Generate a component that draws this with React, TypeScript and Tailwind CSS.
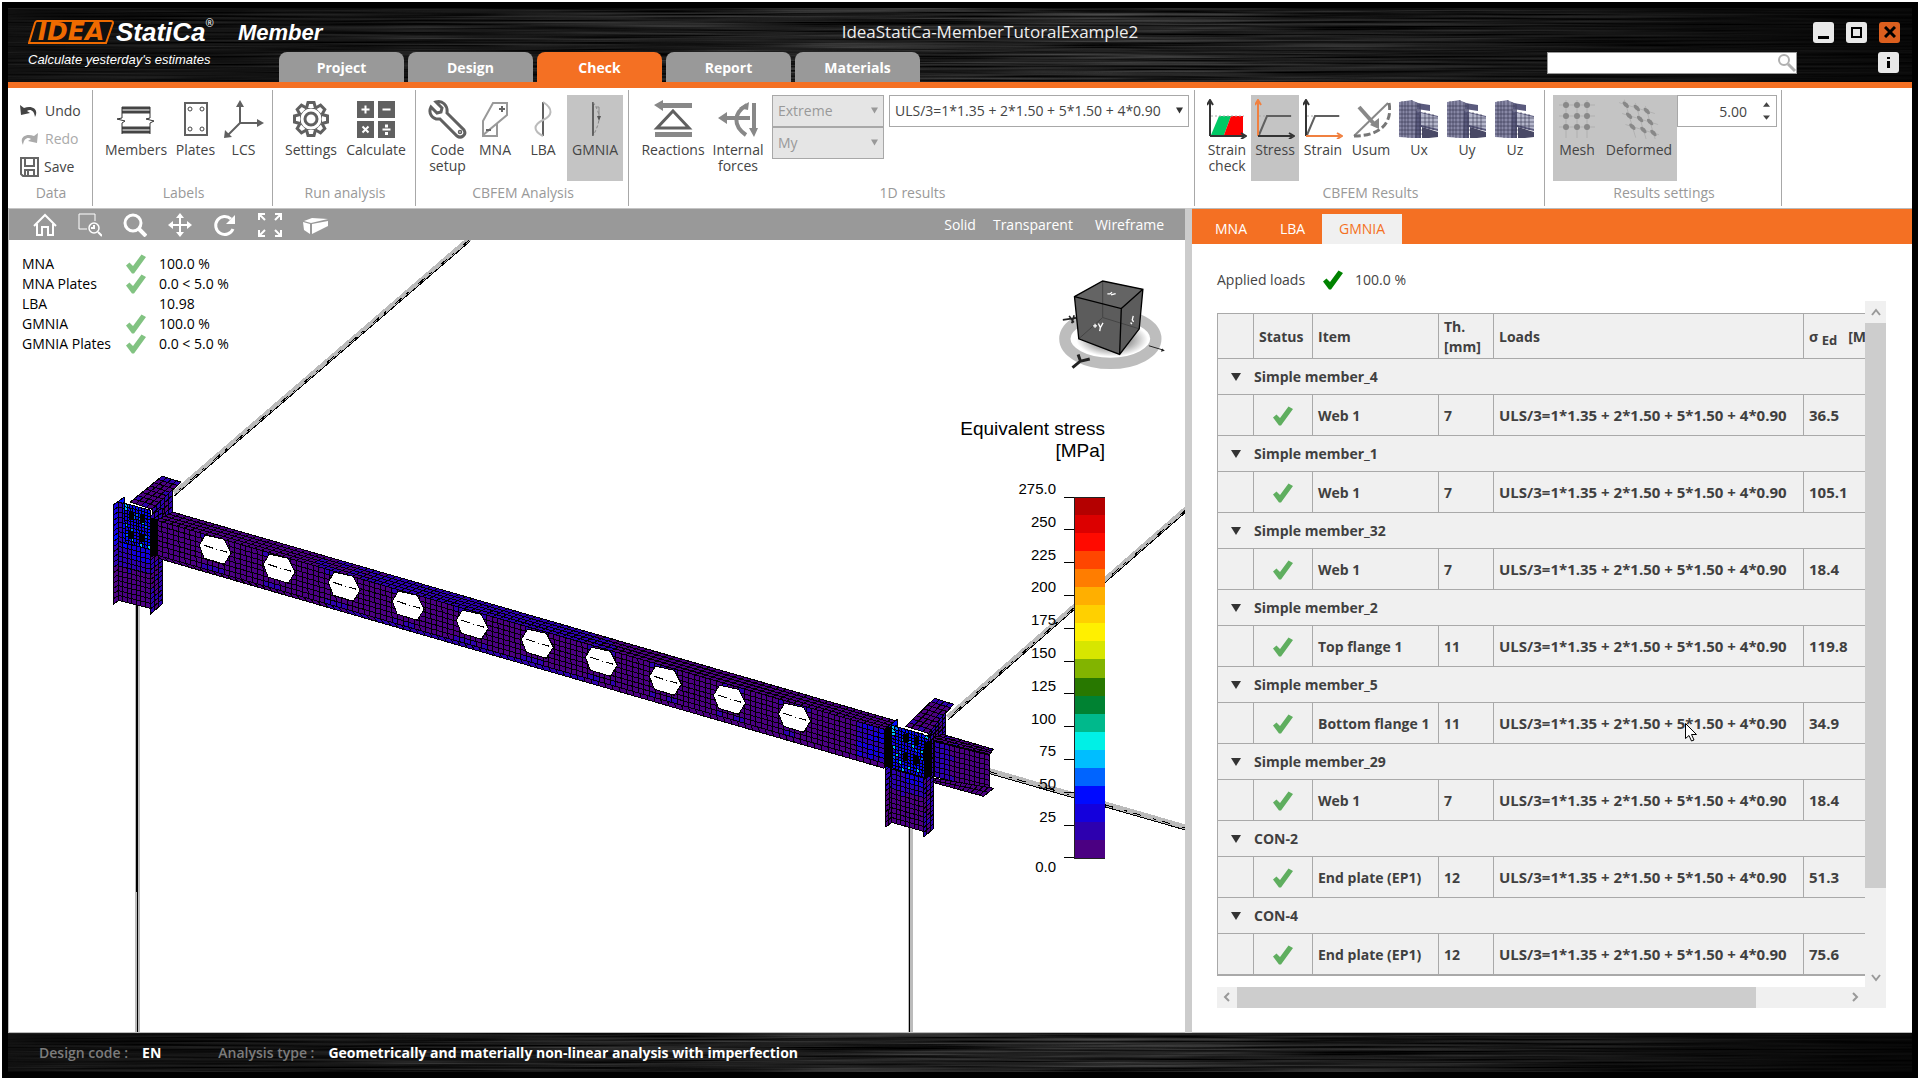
import React from 'react';
import clsx from 'clsx';

type Point = [number, number];

interface ToolProps {
    label: string;
    width: string;
    active?: boolean;
    children: React.ReactNode;
}

interface MeshProps {
    corners: [Point, Point, Point, Point];
    cols: number;
    rows: number;
    color: (u: number, v: number, noise: number) => string;
}

interface ResultGroup {
    name: string;
    item: string;
    thickness: number;
    stress: string;
}

const LOAD_CASE = 'ULS/3=1*1.35 + 2*1.50 + 5*1.50 + 4*0.90';

const groups: ResultGroup[] = [
    { name: 'Simple member_4', item: 'Web 1', thickness: 7, stress: '36.5' },
    { name: 'Simple member_1', item: 'Web 1', thickness: 7, stress: '105.1' },
    { name: 'Simple member_32', item: 'Web 1', thickness: 7, stress: '18.4' },
    { name: 'Simple member_2', item: 'Top flange 1', thickness: 11, stress: '119.8' },
    { name: 'Simple member_5', item: 'Bottom flange 1', thickness: 11, stress: '34.9' },
    { name: 'Simple member_29', item: 'Web 1', thickness: 7, stress: '18.4' },
    { name: 'CON-2', item: 'End plate (EP1)', thickness: 12, stress: '51.3' },
    { name: 'CON-4', item: 'End plate (EP1)', thickness: 12, stress: '75.6' }
];

const summary = [
    { label: 'MNA', ok: true, value: '100.0 %' },
    { label: 'MNA Plates', ok: true, value: '0.0 < 5.0 %' },
    { label: 'LBA', ok: false, value: '10.98' },
    { label: 'GMNIA', ok: true, value: '100.0 %' },
    { label: 'GMNIA Plates', ok: true, value: '0.0 < 5.0 %' }
];

const legendColors = [
    '#b40000', '#dc0000', '#ff0a00', '#ff4600', '#ff7d00', '#ffaf00', '#ffd000', '#fff000', '#d7e600', '#82b400',
    '#287800', '#008232', '#00b98c', '#00f0e6', '#00beff', '#0064ff', '#000aff', '#1400dc', '#2d00af', '#4b0082'
];

const legendLabels = ['275.0', '250', '225', '200', '175', '150', '125', '100', '75', '50', '25', '0.0'];

const PURPLE = '#4b0082';
const INDIGO = '#2d00af';
const BLUE = '#1400dc';
const BRIGHT = '#000aff';
const SKY = '#0064ff';
const CYAN = '#00beff';

function noiseAt(i: number, j: number) {
    const n = Math.sin(i * 12.9898 + j * 78.233) * 43758.5453;
    return n - Math.floor(n);
}

/* ---------- 3D scene ---------- */

function Mesh({ corners, cols, rows, color }: MeshProps) {
    const [a, b, c, d] = corners;
    const at = (u: number, v: number): string => {
        const x = (1 - v) * ((1 - u) * a[0] + u * b[0]) + v * ((1 - u) * d[0] + u * c[0]);
        const y = (1 - v) * ((1 - u) * a[1] + u * b[1]) + v * ((1 - u) * d[1] + u * c[1]);
        return `${x.toFixed(1)} ${y.toFixed(1)}`;
    };
    const fills: Record<string, string> = {};
    for (let i = 0; i < cols; i++) {
        for (let j = 0; j < rows; j++) {
            const fill = color((i + 0.5) / cols, (j + 0.5) / rows, noiseAt(i, j));
            fills[fill] = (fills[fill] || '') +
                `M${at(i / cols, j / rows)}L${at((i + 1) / cols, j / rows)}L${at((i + 1) / cols, (j + 1) / rows)}L${at(i / cols, (j + 1) / rows)}Z`;
        }
    }
    let lines = '';
    for (let i = 0; i <= cols; i++) lines += `M${at(i / cols, 0)}L${at(i / cols, 1)}`;
    for (let j = 0; j <= rows; j++) lines += `M${at(0, j / rows)}L${at(1, j / rows)}`;
    return (
        <g>
            {Object.entries(fills).map(([fill, d]) => (
                <path key={fill} d={d} fill={fill} />
            ))}
            <path d={lines} fill="none" stroke="#000" strokeWidth="1" />
        </g>
    );
}

function Bar({ from, to }: { from: Point; to: Point }) {
    return (
        <g>
            <line x1={from[0]} y1={from[1] - 1} x2={to[0]} y2={to[1] - 1} stroke="#bbbbbb" strokeWidth="5" />
            <line x1={from[0]} y1={from[1]} x2={to[0]} y2={to[1]} stroke="#000" strokeWidth="1" strokeDasharray="9 12 3 6" />
            <line x1={from[0]} y1={from[1] + 2} x2={to[0]} y2={to[1] + 2} stroke="#000" strokeWidth="1" />
        </g>
    );
}

function Scene() {
    const holes = Array.from({ length: 10 }, (_, i) => i);
    const flange = (u: number, _v: number, n: number) => (u > 0.2 + n * 0.12 && u < 0.58 + n * 0.06 ? INDIGO : PURPLE);
    const web = (u: number, v: number, n: number) => {
        if (u > 0.96) return n > 0.4 ? INDIGO : BLUE;
        const near = Math.abs(((u * 11.2 - 0.82) % 1 + 1) % 1 - 0.5) > 0.28;
        return near && u > 0.06 && u < 0.93 && (v < 0.15 || v > 0.82) && n > 0.3 ? INDIGO : PURPLE;
    };
    const column = (u: number, v: number, n: number) => {
        if (v < 0.44) return u < 0.15 ? INDIGO : n > 0.6 ? BRIGHT : BLUE;
        if (v < 0.54) return u > 0.4 ? BLUE : INDIGO;
        return v < 0.62 + n * 0.06 ? INDIGO : PURPLE;
    };
    const panel = (u: number, v: number, n: number) => {
        if (u < 0.12 && v < 0.2) return CYAN;
        if (n > 0.96) return CYAN;
        return n > 0.85 ? SKY : n > 0.3 ? BRIGHT : BLUE;
    };
    const side = (u: number, v: number, n: number) => (n > 0.55 || u > 0.7 ? INDIGO : v < 0.3 ? INDIGO : PURPLE);
    const stub = (_u: number, v: number, n: number) => (v < 0.12 || n > 0.9 ? INDIGO : PURPLE);

    return (
        <svg
            className="absolute inset-0 h-full w-full"
            viewBox="9 240 1176 791"
            preserveAspectRatio="xMinYMin slice"
            shapeRendering="crispEdges"
            aria-hidden="true"
        >
            <Bar from={[470, 239]} to={[174, 494]} />
            <Bar from={[1186, 509]} to={[947, 718]} />
            <Bar from={[988, 771]} to={[1186, 828]} />
            <rect x="135" y="600" width="5" height="432" fill="#bbbbbb" />
            <line x1="137" y1="600" x2="137" y2="892" stroke="#000" strokeWidth="2" />
            <line x1="137" y1="892" x2="137" y2="1032" stroke="#000" strokeWidth="1" />
            <rect x="907" y="826" width="5" height="206" fill="#bbbbbb" />
            <line x1="909" y1="826" x2="909" y2="1032" stroke="#000" strokeWidth="1" />

            {/* left joint */}
            <Mesh corners={[[162, 476], [181, 482], [152, 509], [130, 502]]} cols={4} rows={8} color={stub} />
            <Mesh corners={[[152, 509], [172, 490], [172, 512], [155, 526]]} cols={5} rows={4} color={side} />
            <Mesh corners={[[113, 505], [124, 497], [124, 597], [113, 604]]} cols={2} rows={19} color={column} />
            <Mesh corners={[[118, 502], [150, 510], [150, 608], [118, 600]]} cols={7} rows={20} color={column} />
            <Mesh corners={[[150, 516], [162, 508], [162, 604], [150, 614]]} cols={3} rows={20} color={side} />
            <Mesh corners={[[124, 503], [150, 510], [150, 549], [126, 543]]} cols={9} rows={12} color={panel} />
            {[[131, 516], [142, 519], [131, 535], [142, 538]].map(([x, y]) => (
                <rect key={`${x}-${y}`} x={x - 2} y={y - 4} width="5" height="8" fill="#000" />
            ))}

            {/* castellated beam */}
            <Mesh corners={[[173, 512], [897, 721], [884, 729], [156, 520]]} cols={104} rows={4} color={flange} />
            <Mesh corners={[[156, 520], [884, 729], [884, 763], [157, 555]]} cols={130} rows={7} color={web} />
            <Mesh corners={[[157, 555], [884, 763], [884, 768], [161, 559]]} cols={104} rows={1} color={flange} />
            <polygon points="150,517 158,519 158,555 150,557" fill="#000" />
            {holes.map((i) => {
                const x = Math.round(i * 64.3);
                const y = Math.round(i * 18.7);
                return (
                    <g key={i} transform={`translate(${x} ${y})`}>
                        <polygon points="205,535 224,539 231,553 224,564 204,558 199,545" fill="#fff" stroke="#000" strokeWidth="1" />
                        <path d="M204 545l9 3M216 549h1M220 550l7 2" fill="none" stroke="#000" strokeWidth="1" />
                    </g>
                );
            })}

            {/* right joint */}
            <Mesh corners={[[934, 698], [953, 704], [928, 733], [905, 726]]} cols={4} rows={8} color={stub} />
            <Mesh corners={[[928, 733], [945, 712], [945, 735], [928, 748]]} cols={5} rows={5} color={side} />
            <Mesh corners={[[942, 734], [993, 749], [989, 754], [929, 739]]} cols={11} rows={3} color={stub} />
            <Mesh
                corners={[[929, 740], [989, 755], [989, 790], [929, 775]]}
                cols={12}
                rows={7}
                color={(u, _v, n) => (u < 0.1 ? BLUE : u < 0.3 + n * 0.1 ? INDIGO : PURPLE)}
            />
            <Mesh corners={[[929, 777], [993, 788], [983, 796], [932, 782]]} cols={12} rows={2} color={() => PURPLE} />
            <Mesh corners={[[885, 728], [897, 719], [891, 822], [885, 827]]} cols={2} rows={19} color={column} />
            <Mesh corners={[[891, 725], [923, 734], [923, 831], [891, 822]]} cols={7} rows={20} color={column} />
            <Mesh corners={[[923, 742], [933, 733], [933, 828], [923, 837]]} cols={3} rows={20} color={side} />
            <Mesh corners={[[891, 725], [928, 736], [924, 777], [892, 768]]} cols={11} rows={13} color={panel} />
            <polygon points="884,728 890,726 890,768 884,766" fill="#000" />
            <polygon points="923,742 931,740 931,776 923,779" fill="#000" />
            {[[904, 738], [915, 741], [904, 757], [915, 760]].map(([x, y]) => (
                <rect key={`${x}-${y}`} x={x - 2} y={y - 4} width="5" height="8" fill="#000" />
            ))}
        </svg>
    );
}

function ViewCube() {
    return (
        <svg className="absolute top-[38px] right-[18px] h-[93px] w-[110px]" viewBox="410 235 330 280" aria-hidden="true">
            <defs>
                <radialGradient id="cubeShadow">
                    <stop offset="0.5" stopColor="#999" />
                    <stop offset="1" stopColor="#fff" />
                </radialGradient>
            </defs>
            <ellipse cx="570" cy="418" rx="137" ry="74" fill="#fff" stroke="#bdbdbd" strokeWidth="34" />
            <ellipse cx="575" cy="420" rx="108" ry="52" fill="url(#cubeShadow)" />
            <path d="M462 291L547 244L668 269L657 388L598 465L475 418Z" fill="#5c5c5c" />
            <path d="M462 291L547 244L668 269L603 327Z" fill="#646464" />
            <path d="M547 244V354L475 418M547 354L657 388" fill="none" stroke="#444" strokeWidth="3" />
            <path d="M462 291L547 244L668 269L657 388L598 465L475 418ZM462 291L603 327L668 269M603 327L598 465" fill="none" stroke="#000" strokeWidth="4" />
            <path d="M518 379h12M524 373v12M534 372l6 12l8-14M540 384l-2 11M561 283h8l6-5M572 286l14-4M639 349l-3 12l4 6M631 369l4 5" fill="none" stroke="#fff" strokeWidth="4" />
            <path d="M427 361L468 355M446 349l14 20M461 347l-7 24" fill="none" stroke="#222" strokeWidth="5" />
            <path d="M456 505L480 485L473 465M478 486L508 479" fill="none" stroke="#222" strokeWidth="9" />
            <path d="M686 439L726 451" fill="none" stroke="#222" strokeWidth="3" />
            <path d="M734 454l-12 3l4-10z" fill="#222" />
        </svg>
    );
}

function Legend() {
    return (
        <div className="absolute top-[178px] right-20 flex flex-col items-end font-['Liberation_Sans',Arial,sans-serif] text-black">
            <p className="text-right text-[19px] leading-[22px]">
                Equivalent stress
                <br />
                [MPa]
            </p>
            <svg className="mt-[14px] h-[400px] w-[100px]" viewBox="0 0 100 400" shapeRendering="crispEdges">
                {legendColors.map((fill, i) => (
                    <rect key={fill} x="69" y={21 + i * 18.05} width="31" height="19" fill={fill} />
                ))}
                <rect x="69" y="21" width="31" height="361" fill="none" stroke="#222" strokeWidth="1" />
                {legendLabels.map((label, i) => (
                    <g key={label}>
                        <line x1="59" x2="69" y1={21 + i * 32.8} y2={21 + i * 32.8} stroke="#000" strokeWidth="1" />
                        <text x="51" y={i === 11 ? 396 : 18 + i * 32.8} textAnchor="end" fontSize="15">
                            {label}
                        </text>
                    </g>
                ))}
            </svg>
        </div>
    );
}

/* ---------- icons ---------- */

function Check({ className }: { className: string }) {
    return (
        <svg className={className} viewBox="0 0 20 20" aria-hidden="true">
            <path d="M0 11.5L3.5 8.5L7 12L15.5 0.5L20 3L8 19.5H6Z" fill="currentColor" />
        </svg>
    );
}

function Icon({ children, box = '0 0 40 40' }: { children: React.ReactNode; box?: string }) {
    return (
        <svg className="size-10 shrink-0" viewBox={box} fill="none" stroke="#606060" strokeWidth="2" aria-hidden="true">
            {children}
        </svg>
    );
}

function MembersIcon() {
    return (
        <Icon>
            <path d="M6 9h28M6 13h28M6 29h28M6 33h28" stroke="#444" strokeWidth="3" />
            <path d="M6 11h28M6 31h28" stroke="#aaa" strokeWidth="1" />
            <path d="M6 8v11l-5 1l8 2l-3 2v11M34 8v11l-4 1l8 2l-4 2v11" stroke="#333" strokeWidth="1" />
        </Icon>
    );
}

function PlatesIcon() {
    return (
        <Icon>
            <rect x="9" y="4" width="22" height="32" strokeWidth="2" />
            {[[14, 10], [26, 10], [14, 30], [26, 30]].map(([x, y]) => (
                <circle key={`${x}-${y}`} cx={x} cy={y} r="2" stroke="#444" strokeWidth="1" />
            ))}
        </Icon>
    );
}

function LcsIcon() {
    return (
        <Icon>
            <path d="M16 4v20h20M16 24L3 37" />
            <path d="M12 8l4-7l4 7zM33 20l7 4l-7 4zM1 31l-1 8l8-1z" fill="#606060" stroke="none" />
        </Icon>
    );
}

function SettingsIcon() {
    const teeth = [0, 45, 90, 135, 180, 225, 270, 315];
    return (
        <Icon>
            <circle cx="20" cy="20" r="12" strokeWidth="3" />
            {teeth.map((angle) => (
                <path key={angle} d="M15.5 9L17 3.5H23L24.5 9" fill="#fff" strokeWidth="3" transform={`rotate(${angle} 20 20)`} />
            ))}
            <circle cx="20" cy="20" r="10" fill="#fff" stroke="none" />
            <circle cx="20" cy="20" r="6" strokeWidth="3" />
        </Icon>
    );
}

function CalculateIcon() {
    return (
        <Icon>
            <path d="M1 2h17v17H1zM22 2h17v17H22zM1 22h17v17H1zM22 22h17v17H22z" fill="#606060" stroke="none" />
            <path d="M5.5 10.5h8M9.500 6.500v8M26.500 10.500h8M6.500 27.500l6 6M12.500 27.500l-6 6M26.500 30.500h8" stroke="#fff" strokeWidth="2" />
            <path d="M29 25.500h3v3h-3zM29 33h3v3h-3z" fill="#fff" stroke="none" />
        </Icon>
    );
}

function WrenchIcon() {
    return (
        <Icon>
            <path d="M8 3L14 9L13 13L9 14L3 8C0 14 4 21 12 20L29 37C33 40 39 36 36 31L19 14C20 6 14 1 8 3Z" strokeWidth="3" />
            <circle cx="32" cy="33" r="1.500" strokeWidth="1.500" />
        </Icon>
    );
}

function MnaIcon() {
    return (
        <Icon>
            <path d="M18 4h14v12L8 36v-14zM8 22L8 37h14v-13" stroke="#999" />
            <path d="M24 10h6M27 7v6M11 31h5" stroke="#666" />
        </Icon>
    );
}

function LbaIcon() {
    return (
        <Icon>
            <path d="M20 3v34" strokeWidth="2" />
            <path d="M20 3C31 10 29 17 20 21C10 26 10 32 20 37" stroke="#bbb" />
        </Icon>
    );
}

function GmniaIcon() {
    return (
        <Icon>
            <path d="M18 3v34" strokeWidth="2" />
            <path d="M18 3C25 14 27 20 18 37" stroke="#888" strokeWidth="1" strokeDasharray="3 2" />
            <path d="M24 8v10M21 8h3" stroke="#888" strokeWidth="1" />
            <path d="M22 17h4l-2 5z" fill="#555" stroke="none" />
        </Icon>
    );
}

function ReactionsIcon() {
    return (
        <Icon>
            <path d="M1 6l9-5v3h29v5H10v3zM2 33h37v5H2z" fill="#888" stroke="none" />
            <path d="M20 12L36 29H4z" strokeWidth="3" />
        </Icon>
    );
}

function ForcesIcon() {
    return (
        <Icon>
            <path d="M36 4v28" stroke="#888" strokeWidth="4" />
            <path d="M31 29h9l-4 9zM9 13v12l-9-6zM21 9l10-6l-1 8z" fill="#888" stroke="none" />
            <path d="M7 19h25M29 6C15 14 15 27 28 36" stroke="#888" strokeWidth="4" />
        </Icon>
    );
}

function CurveIcon({ yAxis, xAxis, filled }: { yAxis: string; xAxis: string; filled?: boolean }) {
    return (
        <Icon>
            {filled && <path d="M4 36L12 17h12L17 36z" fill="#00c864" stroke="none" />}
            {filled && <path d="M17 36L24 17h12v19z" fill="#ff0000" stroke="none" />}
            <path d="M4 17h33" stroke="#aaa" strokeWidth="1" strokeDasharray="2 2" />
            {!filled && <path d="M4 36L12 17h24" />}
            <path d="M3 3v34M0 6l3-5l3 5" stroke={yAxis} strokeWidth="2" />
            <path d="M3 37h34M34 34l5 3l-5 3" stroke={xAxis} strokeWidth="2" />
        </Icon>
    );
}

function UsumIcon() {
    return (
        <Icon>
            <path d="M3 37L37 4" stroke="#888" strokeWidth="2" />
            <path d="M38 4C42 25 28 37 3 37" stroke="#777" strokeWidth="3" strokeDasharray="7 3" />
            <path d="M8 8L24 26" stroke="#888" strokeWidth="4" />
            <path d="M19 26l9-7v11z" fill="#888" stroke="none" />
        </Icon>
    );
}

function DisplacementIcon() {
    return (
        <Icon>
            <path d="M0 3L13 1V39L0 38zM12 1L22 5V39H12z" fill="#8888a6" stroke="none" />
            <path d="M17 12L39 17V32L22 28V39H16zM18 4L31 6V12L18 10z" fill="#5a5a7d" stroke="none" />
            <path d="M22 14L39 18V30L22 26z" fill="#b4b6cb" stroke="none" />
            <path d="M23 28L39 33V38L30 39H23z" fill="#494966" stroke="none" />
            <path d="M3 2v36M6 2v36M9 2v37M13 1v38M17 3v36M21 5v34M0 7h20M0 11h20M0 15h20M0 19h39M0 23h39M0 27h39M0 31h24M0 35h24M26 13v17M30 14v17M34 15v16" stroke="#34344e" strokeWidth="1" strokeOpacity="0.6" />
        </Icon>
    );
}

function DotsIcon({ deformed }: { deformed?: boolean }) {
    return (
        <Icon>
            <g transform={deformed ? 'matrix(1 0.300 0.300 1 -4 -3)' : undefined} stroke="#b0b0b0">
                <path d="M2 6h36M2 17h36M2 28h36M9 1v38M20 1v38M30 1v38" strokeWidth="1" />
                {[6, 17, 28].map((y) =>
                    [9, 20, 30].map((x) => <circle key={`${x}-${y}`} cx={x} cy={y} r="3" fill="#888" stroke="none" />)
                )}
            </g>
        </Icon>
    );
}

/* ---------- ribbon ---------- */

function Tool({ label, width, active, children }: ToolProps) {
    return (
        <button
            type="button"
            className={clsx('flex h-[86px] flex-col items-center pt-1 text-center leading-4', width, active && 'bg-[#c4c4c4]')}
        >
            {children}
            <span className="mt-[3px]">{label}</span>
        </button>
    );
}

function RibbonGroup({ title, children, className }: { title: string; children: React.ReactNode; className: string }) {
    return (
        <section className={clsx('my-[2px] flex flex-col justify-between border-r border-[#a8a8a8] pt-[5px] pb-[5px]', className)}>
            <div className="flex pl-2">{children}</div>
            <h2 className="pl-[2px] text-center leading-4 text-[#999999]">{title}</h2>
        </section>
    );
}

function Brushed({ id }: { id: string }) {
    return (
        <svg className="absolute inset-0 h-full w-full" preserveAspectRatio="none" aria-hidden="true">
            <defs>
                <filter id={id} x="0" y="0" width="100%" height="100%" colorInterpolationFilters="sRGB">
                    <feTurbulence type="fractalNoise" baseFrequency="0.004 0.5" numOctaves="3" seed="4" />
                    <feColorMatrix values="0.450 0 0 0 -0.095  0.450 0 0 0 -0.095  0.450 0 0 0 -0.095  0 0 0 0 1" />
                </filter>
                <linearGradient id={`${id}-shade`}>
                    <stop offset="0" stopColor="#000" stopOpacity="0.500" />
                    <stop offset="0.100" stopColor="#000" stopOpacity="0.500" />
                    <stop offset="0.400" stopColor="#000" stopOpacity="0.100" />
                    <stop offset="0.600" stopColor="#000" stopOpacity="0" />
                    <stop offset="0.850" stopColor="#000" stopOpacity="0.500" />
                    <stop offset="1" stopColor="#000" stopOpacity="0.800" />
                </linearGradient>
            </defs>
            <rect width="100%" height="100%" filter={`url(#${id})`} />
            <rect width="100%" height="100%" fill={`url(#${id}-shade)`} />
        </svg>
    );
}

function TitleBar() {
    const tabs = ['Project', 'Design', 'Check', 'Report', 'Materials'];
    return (
        <header className="relative h-20 border-b-6 border-[#f47023] bg-[#151515] text-white">
            <Brushed id="brushTop" />
            <div className="relative flex h-11 items-center pt-1 pl-5 pr-3">
                <div className="relative flex h-6 w-[86px] items-center justify-center">
                    <svg className="absolute inset-0 h-full w-full" viewBox="0 0 86 24" aria-hidden="true">
                        <path d="M9 1H83Q85 1 85 3L78 23H1L7 3Q8 1 9 1Z" fill="#111" stroke="#ef6a00" strokeWidth="2" />
                    </svg>
                    <span className="relative font-['DejaVu_Sans',sans-serif] text-[25px] leading-6 font-bold text-[#ef6a00] italic">IDEA</span>
                </div>
                <span className="ml-[2px] font-['Liberation_Sans',sans-serif] text-[26px] font-bold italic">StatiCa</span>
                <sup className="-mt-2 text-[10px]">®</sup>
                <span className="ml-6 font-['Liberation_Sans',sans-serif] text-[22px] font-bold italic">Member</span>
                <h1 className="absolute inset-x-0 text-center text-[17px] leading-6 text-[#eeeeee]">
                    <span className="ml-[60px]">IdeaStatiCa-MemberTutoralExample2</span>
                </h1>
                <div className="relative ml-auto flex gap-3">
                    <button type="button" aria-label="Minimize" className="flex h-[21px] w-[21px] items-end justify-center rounded-[3px] bg-[#e8e8e8] pb-1">
                        <span className="h-[3px] w-[11px] bg-black" />
                    </button>
                    <button type="button" aria-label="Maximize" className="flex h-[21px] w-[21px] items-center justify-center rounded-[3px] bg-[#e8e8e8]">
                        <span className="h-[11px] w-[11px] border-2 border-black" />
                    </button>
                    <button type="button" aria-label="Close" className="flex h-[21px] w-[21px] items-center justify-center rounded-[3px] bg-[#dc5f1e]">
                        <svg className="size-3" viewBox="0 0 12 12" aria-hidden="true">
                            <path d="M1 1L11 11M11 1L1 11" stroke="#000" strokeWidth="3" />
                        </svg>
                    </button>
                </div>
            </div>
            <div className="relative flex h-[30px] items-start pl-5 pr-[13px]">
                <p className="w-[251px] font-['Liberation_Sans',sans-serif] text-[13px] leading-4 italic">Calculate yesterday's estimates</p>
                <nav className="flex gap-1">
                    {tabs.map((tab) => (
                        <button
                            key={tab}
                            type="button"
                            className={clsx('h-[30px] w-[125px] rounded-t-lg pt-px text-sm font-bold', tab === 'Check' ? 'bg-[#f47023]' : 'bg-[#999999]')}
                        >
                            {tab}
                        </button>
                    ))}
                </nav>
                <div className="relative ml-auto">
                    <input type="text" aria-label="Search" className="block h-[22px] w-[250px] border border-[#999999] bg-white px-1 text-black" />
                    <svg className="absolute top-px right-0 size-5" viewBox="0 0 20 20" aria-hidden="true">
                        <circle cx="7" cy="7" r="5" fill="none" stroke="#b0b0b0" strokeWidth="2" />
                        <path d="M11 11L18 18" stroke="#b0b0b0" strokeWidth="3" />
                    </svg>
                </div>
                <button type="button" aria-label="Information" className="ml-[81px] flex h-[21px] w-[21px] items-center justify-center rounded-[3px] bg-[#e8e8e8]">
                    <svg className="h-[11px] w-[3px]" viewBox="0 0 3 11" aria-hidden="true">
                        <path d="M0 0h3v2H0zM0 4h3v7H0z" fill="#000" />
                    </svg>
                </button>
            </div>
        </header>
    );
}

function DropDown({ label, value, className, disabled }: { label: string; value: string; className: string; disabled?: boolean }) {
    return (
        <div className="relative">
            <select
                aria-label={label}
                disabled={disabled}
                className={clsx('block h-8 appearance-none border border-[#a8a8a8] px-[5px]', className, disabled ? 'bg-[#e5e5e5] text-[#999999] opacity-100' : 'bg-white')}
            >
                <option>{value}</option>
            </select>
            <svg className={clsx('pointer-events-none absolute top-3 right-[6px] h-[7px] w-[7px]', disabled ? 'text-[#999999]' : 'text-[#333333]')} viewBox="0 0 8 7" aria-hidden="true">
                <path d="M0 0h8L4 7z" fill="currentColor" />
            </svg>
        </div>
    );
}

function Ribbon() {
    return (
        <div className="flex h-[120px] bg-white text-sm text-[#444444]">
            <RibbonGroup title="Data" className="w-[85px]">
                <div className="flex flex-col pl-1">
                    <button type="button" className="flex h-7 items-center gap-[7px] pt-1">
                        <svg className="h-4 w-[18px]" viewBox="0 0 18 16" aria-hidden="true">
                            <path d="M0 2L1 12L10 10L7 8C10 6 14 7 15 14C19 7 13 2 4 5Z" fill="#444" />
                        </svg>
                        Undo
                    </button>
                    <button type="button" disabled className="flex h-7 items-center gap-[7px] pt-1 text-[#aaaaaa]">
                        <svg className="h-4 w-[18px]" viewBox="0 0 18 16" aria-hidden="true">
                            <path d="M18 2L17 12L8 10L11 8C8 6 4 7 3 14C-1 7 5 2 14 5Z" fill="#aaa" />
                        </svg>
                        Redo
                    </button>
                    <button type="button" className="flex h-7 items-center gap-[5px] pt-1">
                        <svg className="h-5 w-[19px]" viewBox="0 0 19 20" fill="none" stroke="#666" strokeWidth="2" aria-hidden="true">
                            <path d="M1 1H18V19H3L1 17zM5 1V9H14V1M5 19V13H14V19M8 14v4" />
                        </svg>
                        Save
                    </button>
                </div>
            </RibbonGroup>

            <RibbonGroup title="Labels" className="w-[180px]">
                <Tool label="Members" width="w-[70px]"><MembersIcon /></Tool>
                <Tool label="Plates" width="w-[49px]"><PlatesIcon /></Tool>
                <Tool label="LCS" width="w-[47px]"><LcsIcon /></Tool>
            </RibbonGroup>

            <RibbonGroup title="Run analysis" className="w-[143px]">
                <Tool label="Settings" width="w-[60px]"><SettingsIcon /></Tool>
                <Tool label="Calculate" width="w-[70px]"><CalculateIcon /></Tool>
            </RibbonGroup>

            <RibbonGroup title="CBFEM Analysis" className="w-[213px]">
                <Tool label="Code setup" width="w-[47px]"><WrenchIcon /></Tool>
                <Tool label="MNA" width="w-12"><MnaIcon /></Tool>
                <Tool label="LBA" width="w-12"><LbaIcon /></Tool>
                <Tool label="GMNIA" width="w-14" active><GmniaIcon /></Tool>
            </RibbonGroup>

            <RibbonGroup title="1D results" className="w-[566px]">
                <Tool label="Reactions" width="w-[72px]"><ReactionsIcon /></Tool>
                <Tool label="Internal forces" width="w-[58px]"><ForcesIcon /></Tool>
                <div className="ml-[5px]">
                    <DropDown label="Extreme" value="Extreme" className="w-[112px]" disabled />
                    <DropDown label="Component" value="My" className="w-[112px]" disabled />
                </div>
                <div className="ml-[5px]">
                    <DropDown label="Load case" value={LOAD_CASE} className="w-[300px]" />
                </div>
            </RibbonGroup>

            <RibbonGroup title="CBFEM Results" className="w-[350px]">
                <Tool label="Strain check" width="w-12"><CurveIcon yAxis="#333" xAxis="#333" filled /></Tool>
                <Tool label="Stress" width="w-12" active><CurveIcon yAxis="#f08040" xAxis="#333" /></Tool>
                <Tool label="Strain" width="w-12"><CurveIcon yAxis="#333" xAxis="#f08040" /></Tool>
                <Tool label="Usum" width="w-12"><UsumIcon /></Tool>
                <Tool label="Ux" width="w-12"><DisplacementIcon /></Tool>
                <Tool label="Uy" width="w-12"><DisplacementIcon /></Tool>
                <Tool label="Uz" width="w-12"><DisplacementIcon /></Tool>
            </RibbonGroup>

            <RibbonGroup title="Results settings" className="w-[237px]">
                <Tool label="Mesh" width="w-12" active><DotsIcon /></Tool>
                <Tool label="Deformed" width="w-[76px]" active><DotsIcon deformed /></Tool>
                <div className="relative">
                    <input type="text" aria-label="Deformation scale" defaultValue="5.00" className="h-8 w-[100px] border border-[#a8a8a8] pr-[29px] text-right" />
                    <svg className="absolute top-[6px] right-[7px] h-5 w-[7px]" viewBox="0 0 8 20" aria-hidden="true">
                        <path d="M0 5h8L4 0zM0 15h8L4 20z" fill="#444" />
                    </svg>
                </div>
            </RibbonGroup>
        </div>
    );
}

/* ---------- viewport ---------- */

function ViewToolbar() {
    return (
        <div className="flex h-8 items-center border-t border-[#c4c4c4] bg-[#999999] pt-px pr-[21px] pl-6 text-sm text-white">
            <div className="flex gap-[21px]">
                <button type="button" aria-label="Home">
                    <svg className="size-6" viewBox="0 0 24 24" fill="none" stroke="#fff" strokeWidth="2" aria-hidden="true">
                        <path d="M1 13L12 2L23 13M4 11V22H9V14H15V22H20V11" />
                    </svg>
                </button>
                <button type="button" aria-label="Zoom window">
                    <svg className="size-6" viewBox="0 0 24 24" fill="none" stroke="#fff" aria-hidden="true">
                        <path d="M9 16H1V1H17V8" />
                        <circle cx="16" cy="15" r="5" strokeWidth="1.500" />
                        <path d="M16 12v3h-3M20 19l4 4" strokeWidth="2" />
                    </svg>
                </button>
                <button type="button" aria-label="Zoom">
                    <svg className="size-6" viewBox="0 0 24 24" fill="none" stroke="#fff" strokeWidth="3" aria-hidden="true">
                        <circle cx="10" cy="10" r="8" />
                        <path d="M16 16l7 7" strokeWidth="4" />
                    </svg>
                </button>
                <button type="button" aria-label="Pan">
                    <svg className="size-6" viewBox="0 0 24 24" fill="none" stroke="#fff" strokeWidth="2" aria-hidden="true">
                        <path d="M12 3v18M3 12h18" />
                        <path d="M8 5l4-5l4 5zM8 19l4 5l4-5zM5 8l-5 4l5 4zM19 8l5 4l-5 4z" fill="#fff" stroke="none" />
                    </svg>
                </button>
                <button type="button" aria-label="Rotate">
                    <svg className="size-6" viewBox="0 0 24 24" fill="none" stroke="#fff" strokeWidth="3" aria-hidden="true">
                        <path d="M18 6A9 9 0 1 0 20 16" />
                        <path d="M22 2V11H13z" fill="#fff" stroke="none" />
                    </svg>
                </button>
                <button type="button" aria-label="Fit all">
                    <svg className="size-6" viewBox="0 0 24 24" fill="none" stroke="#fff" strokeWidth="2" aria-hidden="true">
                        <path d="M1 7V1H7M1 1L7 7M17 1H23V7M23 1L17 7M1 17V23H7M1 23L7 17M17 23H23V17M23 23L17 17" />
                    </svg>
                </button>
                <button type="button" aria-label="Perspective">
                    <svg className="h-6 w-[26px]" viewBox="0 0 26 24" aria-hidden="true">
                        <path d="M0 9L7 11V21L1 17zM9 11L25 8V13L9 21zM1 8L9 5L25 6L8 10z" fill="#fff" />
                    </svg>
                </button>
            </div>
            <div className="ml-auto flex">
                <button type="button">Solid</button>
                <button type="button" className="ml-[17px]">Transparent</button>
                <button type="button" className="ml-[22px]">Wireframe</button>
            </div>
        </div>
    );
}

function Viewport() {
    return (
        <section className="flex flex-1 flex-col border-b border-[#bbbbbb]">
            <ViewToolbar />
            <div className="relative flex-1 overflow-hidden bg-white">
                <Scene />
                <dl className="relative flex flex-col pt-[14px] pl-[13px] text-sm leading-5 text-black">
                    {summary.map((row) => (
                        <div key={row.label} className="flex">
                            <dt className="w-[104px]">{row.label}</dt>
                            <dd className="flex">
                                <span className="flex w-[33px]">{row.ok && <Check className="size-5 text-[#82c382]" />}</span>
                                {row.value}
                            </dd>
                        </div>
                    ))}
                </dl>
                <ViewCube />
                <Legend />
            </div>
        </section>
    );
}

/* ---------- results ---------- */

function Arrow({ d, className }: { d: string; className: string }) {
    return (
        <svg className={className} viewBox="0 0 10 10" fill="none" stroke="#999" strokeWidth="2" aria-hidden="true">
            <path d={d} />
        </svg>
    );
}

function ResultsTable() {
    const cell = 'border border-[#a9a9a9] px-[5px] pt-[2px]';
    return (
        <table className="w-[800px] table-fixed border-collapse border-b-2 border-[#a9a9a9] bg-[#f0f0f0] text-left font-bold text-[#404040]">
            <colgroup>
                <col className="w-9" />
                <col className="w-[59px]" />
                <col className="w-[126px]" />
                <col className="w-[55px]" />
                <col className="w-[310px]" />
                <col />
            </colgroup>
            <thead>
                <tr className="h-[45px] text-sm leading-5">
                    <th className={cell} aria-label="Expand" />
                    <th className={cell}>Status</th>
                    <th className={cell}>Item</th>
                    <th className={cell}>Th.<br />[mm]</th>
                    <th className={cell}>Loads</th>
                    <th className={cell}>σ <sub className="text-[13px]">Ed</sub> &nbsp; [MPa]</th>
                </tr>
            </thead>
            {groups.map((group) => (
                <tbody key={group.name}>
                    <tr className="h-9 text-sm">
                        <th colSpan={6} className="border border-[#a9a9a9] pt-px">
                            <button type="button" className="flex items-center">
                                <svg className="mr-[13px] ml-[13px] h-2 w-[10px]" viewBox="0 0 10 8" aria-hidden="true">
                                    <path d="M0 0h10L5 8z" fill="#333" />
                                </svg>
                                {group.name}
                            </button>
                        </th>
                    </tr>
                    <tr className="h-[41px] text-sm">
                        <td className={cell} />
                        <td className={cell}><Check className="mx-auto size-5 text-[#5fae5f]" /></td>
                        <td className={clsx(cell, 'whitespace-nowrap')}>{group.item}</td>
                        <td className={cell}>{group.thickness}</td>
                        <td className={clsx(cell, 'text-[15px] whitespace-nowrap')}>{LOAD_CASE}</td>
                        <td className={clsx(cell, 'text-[15px]')}>{group.stress}</td>
                    </tr>
                </tbody>
            ))}
        </table>
    );
}

function ResultsPanel() {
    return (
        <section className="flex w-[720px] flex-col border-t border-b border-[#bbbbbb] bg-white text-sm text-[#444444]">
            <nav className="flex h-[35px] items-end bg-[#f47023] pl-[7px] text-white">
                <button type="button" className="h-[30px] w-16">MNA</button>
                <button type="button" className="h-[30px] w-[59px]">LBA</button>
                <button type="button" className="h-[30px] w-20 bg-[#f0f0f0] text-[#f47023]">GMNIA</button>
            </nav>
            <div className="flex flex-1 flex-col pt-[26px] pr-[26px] pb-6 pl-[25px]">
                <div className="flex h-5 items-center">
                    Applied loads
                    <Check className="mr-3 ml-[18px] size-5 text-[#008200]" />
                    100.0 %
                </div>
                <div className="mt-[11px] flex flex-1">
                    <div className="min-w-0 flex-1 overflow-hidden pt-3 pb-[11px]">
                        <ResultsTable />
                    </div>
                    <div className="flex w-[21px] flex-col items-center bg-[#f0f0f0]">
                        <Arrow className="my-[6px] size-[10px]" d="M1 8L5 3L9 8" />
                        <div className="h-[565px] w-full bg-[#cdcdcd]" />
                        <Arrow className="mt-auto mb-1 size-[10px]" d="M1 2L5 7L9 2" />
                    </div>
                </div>
                <div className="flex h-[21px] items-center bg-[#f0f0f0]">
                    <Arrow className="mx-[5px] size-[10px]" d="M7 1L3 5L7 9" />
                    <div className="h-full w-[519px] bg-[#cdcdcd]" />
                    <Arrow className="mr-[26px] ml-auto size-[10px]" d="M3 1L7 5L3 9" />
                </div>
            </div>
        </section>
    );
}

export default function App() {
    return (
        <div className="relative flex min-h-screen flex-col bg-white px-[2px] pt-[2px] pb-[3px] font-['Open_Sans','Noto_Sans',sans-serif]">
            <div className="flex flex-1 flex-col border-6 border-black">
                <TitleBar />
                <Ribbon />
                <main className="flex flex-1 border-l border-[#bbbbbb] bg-white">
                    <Viewport />
                    <div className="w-[7px] bg-[#cccccc]" />
                    <ResultsPanel />
                </main>
                <footer className="relative flex h-[39px] items-center bg-[#151515] pt-[2px] text-sm font-bold">
                    <Brushed id="brushBottom" />
                    <p className="relative flex pl-[31px] text-white">
                        <span className="mr-[14px] font-semibold text-[#7c7c7c]">Design code :</span>
                        EN
                        <span className="mr-[14px] ml-[57px] font-semibold text-[#7c7c7c]">Analysis type :</span>
                        Geometrically and materially non-linear analysis with imperfection
                    </p>
                </footer>
            </div>
            {/* mouse pointer */}
            <svg className="pointer-events-none absolute top-[723px] left-[1685px] h-[19px] w-3" viewBox="0 0 12 19" aria-hidden="true">
                <path d="M0.500 0.500V15.500L4 12.500L6.500 18L9 17L6.500 11.500H11.500Z" fill="#fff" stroke="#000" />
            </svg>
        </div>
    );
}
